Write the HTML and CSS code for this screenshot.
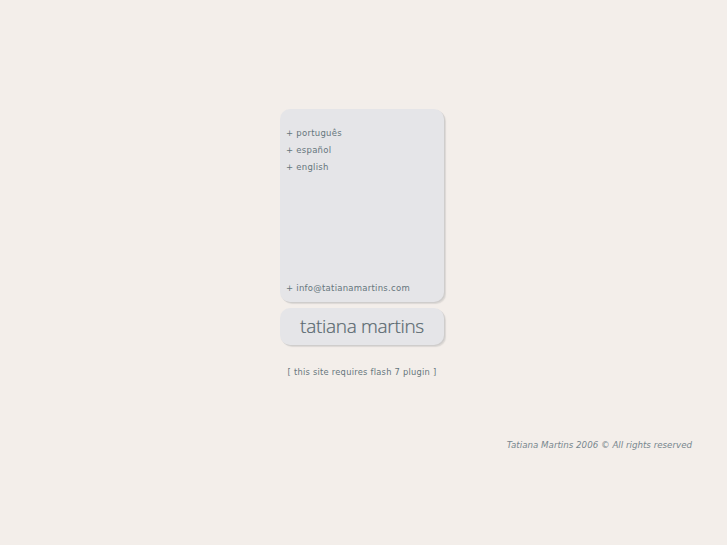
FILE: index.html
```html
<!DOCTYPE html>
<html>
<head>
<meta charset="utf-8">
<link rel="stylesheet" href="styles.css">
</head>
<body>
<div class="page">
  <div class="column">
    <div class="card menu">
      <ul class="langs">
        <li>+ português</li>
        <li>+ español</li>
        <li>+ english</li>
      </ul>
      <div class="mail">+ info@tatianamartins.com</div>
    </div>
    <div class="card name">tatiana martins</div>
    <div class="req">[ this site requires flash 7 plugin ]</div>
  </div>
  <div class="copy">Tatiana Martins 2006 © All rights reserved</div>
</div>
</body>
</html>
```
FILE: styles.css
```css
html, body {
  margin: 0;
  padding: 0;
  background: #f3eeea;
  height: 100%;
}
.page {
  width: 727px;
  height: 545px;
  display: flex;
  flex-direction: column;
  font-family: "DejaVu Sans", sans-serif;
  color: #66767d;
}
.column {
  width: 164px;
  margin: 109px 0 0 280px;
  display: flex;
  flex-direction: column;
}
.card {
  background: #e5e5e8;
  border-radius: 10px;
  box-shadow: 1px 1px 0 #cfcdcc, 2px 2px 1px #dcd8d5;
}
.menu {
  height: 193px;
  display: flex;
  flex-direction: column;
  justify-content: space-between;
  padding: 18px 0 8px 6px;
  box-sizing: border-box;
  font-size: 8.5px;
  letter-spacing: 0.25px;
  font-weight: 500;
}
.langs {
  list-style: none;
  margin: 0;
  padding: 0;
}
.langs li {
  height: 17px;
  line-height: 12px;
}
.mail {
  line-height: 12px;
}
.name {
  margin-top: 6px;
  height: 37px;
  line-height: 37px;
  text-align: center;
  font-family: "Open Sans", sans-serif;
  font-weight: 300;
  font-size: 19px;
  letter-spacing: -0.3px;
  color: #58676e;
  -webkit-text-stroke: 0.2px #58676e;
}
.req {
  margin: 21px -10px 0 -10px;
  white-space: nowrap;
  text-align: center;
  font-size: 8.3px;
  letter-spacing: 0.25px;
  line-height: 12px;
}
.copy {
  margin: 61px 0 0 0;
  padding-right: 35px;
  text-align: right;
  font-style: italic;
  font-size: 8.7px;
  line-height: 12px;
  color: #78878e;
}
```
